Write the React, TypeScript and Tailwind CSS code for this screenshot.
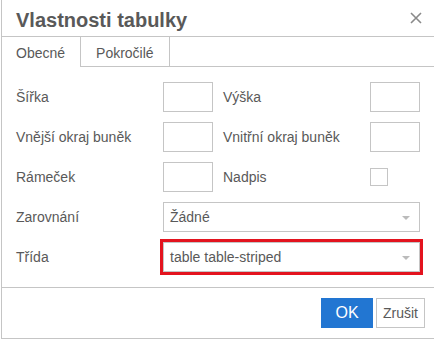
const labelCls = "text-[14px] leading-[16px] text-[#595959]";

function Field() {
  return <div className="h-[30px] w-[50px] border border-[#c5c5c5] bg-white" />;
}

function Select({ value, highlight = false }: { value: string; highlight?: boolean }) {
  return (
    <div
      className={`col-span-3 flex h-[30px] items-center justify-between border border-[#c5c5c5] bg-white pl-[6px] pr-[9px] ${
        highlight ? "outline-[3px] outline-solid outline-[#e3131e]" : ""
      }`}
    >
      <span className="text-[14px] leading-[16px] text-[#595959]">{value}</span>
      <svg width="8" height="4" viewBox="0 0 8 4" className="mt-[1px]">
        <path d="M0 0h8L4 4z" fill="#bbbbbb" />
      </svg>
    </div>
  );
}

export default function App() {
  return (
    <div className="h-[340px] w-[434px] overflow-hidden bg-white [font-family:'Liberation_Sans',Arial,sans-serif]">
      <div className="ml-px w-[460px] border-b border-l border-[#c5c5c5]">
        {/* Header */}
        <div className="flex h-[37px] items-start justify-between border-b border-[#c5c5c5] pl-[14px] pr-[39px] pt-[9px]">
          <h1 className="text-[20px] font-bold leading-[22px] text-[#595959]">Vlastnosti tabulky</h1>
          <svg width="12" height="12" viewBox="0 0 12 12" className="mt-[3px]">
            <path d="M1 1l10 10M11 1L1 11" stroke="#8a8a8a" strokeWidth="1.6" />
          </svg>
        </div>

        {/* Tabs */}
        <div className="flex h-[30px]">
          <div className="border-r border-[#c5c5c5] pl-[14px] pr-[15px] pt-[8px] text-[14px] leading-[16px] text-[#595959]">
            Obecné
          </div>
          <div className="border-b border-r border-[#c5c5c5] px-[15px] pt-[8px] text-[14px] leading-[16px] text-[#595959]">
            Pokročilé
          </div>
          <div className="flex-1 border-b border-[#c5c5c5]" />
        </div>

        {/* Form */}
        <div className="grid grid-cols-[137px_50px_137px_50px] items-center gap-[10px] pb-[15px] pl-[14px] pt-[15px]">
          <span className={labelCls}>Šířka</span>
          <Field />
          <span className={labelCls}>Výška</span>
          <Field />

          <span className={labelCls}>Vnější okraj buněk</span>
          <Field />
          <span className={labelCls}>Vnitřní okraj buněk</span>
          <Field />

          <span className={labelCls}>Rámeček</span>
          <Field />
          <span className={labelCls}>Nadpis</span>
          <div className="flex h-[30px] items-center">
            <div className="h-[18px] w-[18px] border border-[#c5c5c5] bg-white" />
          </div>

          <span className={labelCls}>Zarovnání</span>
          <Select value="Žádné" />

          <span className={labelCls}>Třída</span>
          <Select value="table table-striped" highlight />
        </div>

        {/* Footer */}
        <div className="flex items-center gap-[3px] border-t border-[#c5c5c5] pb-[10px] pl-[319px] pt-[10px]">
          <button className="h-[30px] w-[52px] bg-[#2276d2] text-[16px] text-white">OK</button>
          <button className="h-[30px] w-[49px] border border-[#c5c5c5] bg-white text-[14px] text-[#595959]">
            Zrušit
          </button>
        </div>
      </div>
    </div>
  );
}
